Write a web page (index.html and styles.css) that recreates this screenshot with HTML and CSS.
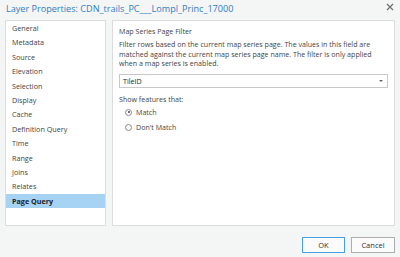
FILE: index.html
```html
<!DOCTYPE html>
<html lang="en">
  <head>
    <meta charset="UTF-8" />
    <title>Layer Properties</title>
    <link rel="stylesheet" href="styles.css">
  </head>
  <body>
    <div class="dialog">
      <div class="title-bar">
        <span class="title">Layer Properties: CDN_trails_PC___Lompl_Princ_17000</span>
        <span class="close">
          <svg width="8" height="8" viewBox="0 0 8 8">
            <path d="M1 1 L7 7 M7 1 L1 7" stroke="#707070" stroke-width="1.3" />
          </svg>
        </span>
      </div>

      <div class="content">
        <ul class="nav">
          <li>General</li>
          <li>Metadata</li>
          <li>Source</li>
          <li>Elevation</li>
          <li>Selection</li>
          <li>Display</li>
          <li>Cache</li>
          <li>Definition Query</li>
          <li>Time</li>
          <li>Range</li>
          <li>Joins</li>
          <li>Relates</li>
          <li class="active">Page Query</li>
        </ul>

        <div class="panel">
          <p class="heading">Map Series Page Filter</p>
          <p class="desc">
            Filter rows based on the current map series page. The values in this field are<br />
            matched against the current map series page name. The filter is only applied<br />
            when a map series is enabled.
          </p>
          <div class="select">
            <span>TileID</span>
            <span class="arrow"></span>
          </div>
          <p class="label">Show features that:</p>
          <label class="radio"><span class="dot checked"></span>Match</label>
          <label class="radio"><span class="dot"></span>Don't Match</label>
        </div>
      </div>

      <div class="footer">
        <button class="btn primary">OK</button>
        <button class="btn">Cancel</button>
      </div>
    </div>
  </body>
</html>
```

FILE: styles.css
```css
body {
  margin: 0;
  padding: 0;
  background-color: #f4f5f5;
  font-family: "Open Sans", "Noto Sans", sans-serif;
  color: #333;
}
.dialog {
  width: 400px;
  height: 257px;
  display: flex;
  flex-direction: column;
}

/* Title bar */
.title-bar {
  height: 20px;
  display: flex;
  align-items: center;
  justify-content: space-between;
  padding: 0 6px 0 6px;
  box-sizing: border-box;
}
.title {
  color: #2e7fc0;
  font-size: 9.1px;
  margin-top: -3px;
}
.close {
  display: flex;
  margin-top: -6px;
}

/* Main area */
.content {
  display: flex;
  gap: 6px;
  padding: 0 5px;
  height: 206px;
}
.nav {
  list-style: none;
  margin: 0;
  padding: 0;
  width: 101px;
  flex-shrink: 0;
  box-sizing: border-box;
  background-color: #fff;
  border: 1px solid #dcdcdc;
}
.nav li {
  height: 14.4px;
  line-height: 14.4px;
  padding-left: 6px;
  font-size: 7.2px;
  color: #444;
}
.nav li.active {
  background-color: #a6d3f3;
  font-weight: bold;
  color: #222;
}
.panel {
  flex: 1;
  min-width: 0;
  background-color: #fff;
  border: 1px solid #dcdcdc;
  box-sizing: border-box;
  padding: 5px 6px 0 6px;
  font-size: 7.1px;
  color: #444;
}
.heading {
  margin: 0 0 3px 0;
  line-height: 11px;
}
.desc {
  margin: 0;
  line-height: 9.5px;
  white-space: nowrap;
}
.select {
  margin-top: 5px;
  height: 14px;
  border: 1px solid #c8c8c8;
  box-sizing: border-box;
  display: flex;
  align-items: center;
  justify-content: space-between;
  padding: 0 4px 0 3px;
  color: #222;
}
.arrow {
  width: 0;
  height: 0;
  border-left: 2px solid transparent;
  border-right: 2px solid transparent;
  border-top: 2px solid #666;
}
.label {
  margin: 6px 0 1px 0;
  line-height: 10px;
}
.radio {
  display: flex;
  align-items: center;
  gap: 4px;
  height: 15px;
  padding-left: 6px;
}
.dot {
  width: 7px;
  height: 7px;
  border: 1px solid #8a8a8a;
  border-radius: 50%;
  box-sizing: border-box;
  position: relative;
  background-color: #fff;
}
.dot.checked::after {
  content: "";
  position: absolute;
  left: 1.5px;
  top: 1.5px;
  width: 2px;
  height: 2px;
  border-radius: 50%;
  background-color: #444;
}

/* Buttons */
.footer {
  display: flex;
  justify-content: flex-end;
  gap: 6px;
  padding: 11px 5px 0 0;
}
.btn {
  width: 44px;
  height: 16px;
  padding: 0;
  font-family: "Open Sans", "Noto Sans", sans-serif;
  font-size: 7.5px;
  color: #333;
  background-color: #fbfbfb;
  border: 1px solid #adadad;
}
.btn.primary {
  width: 43px;
  border-color: #4a9fe0;
}
```
